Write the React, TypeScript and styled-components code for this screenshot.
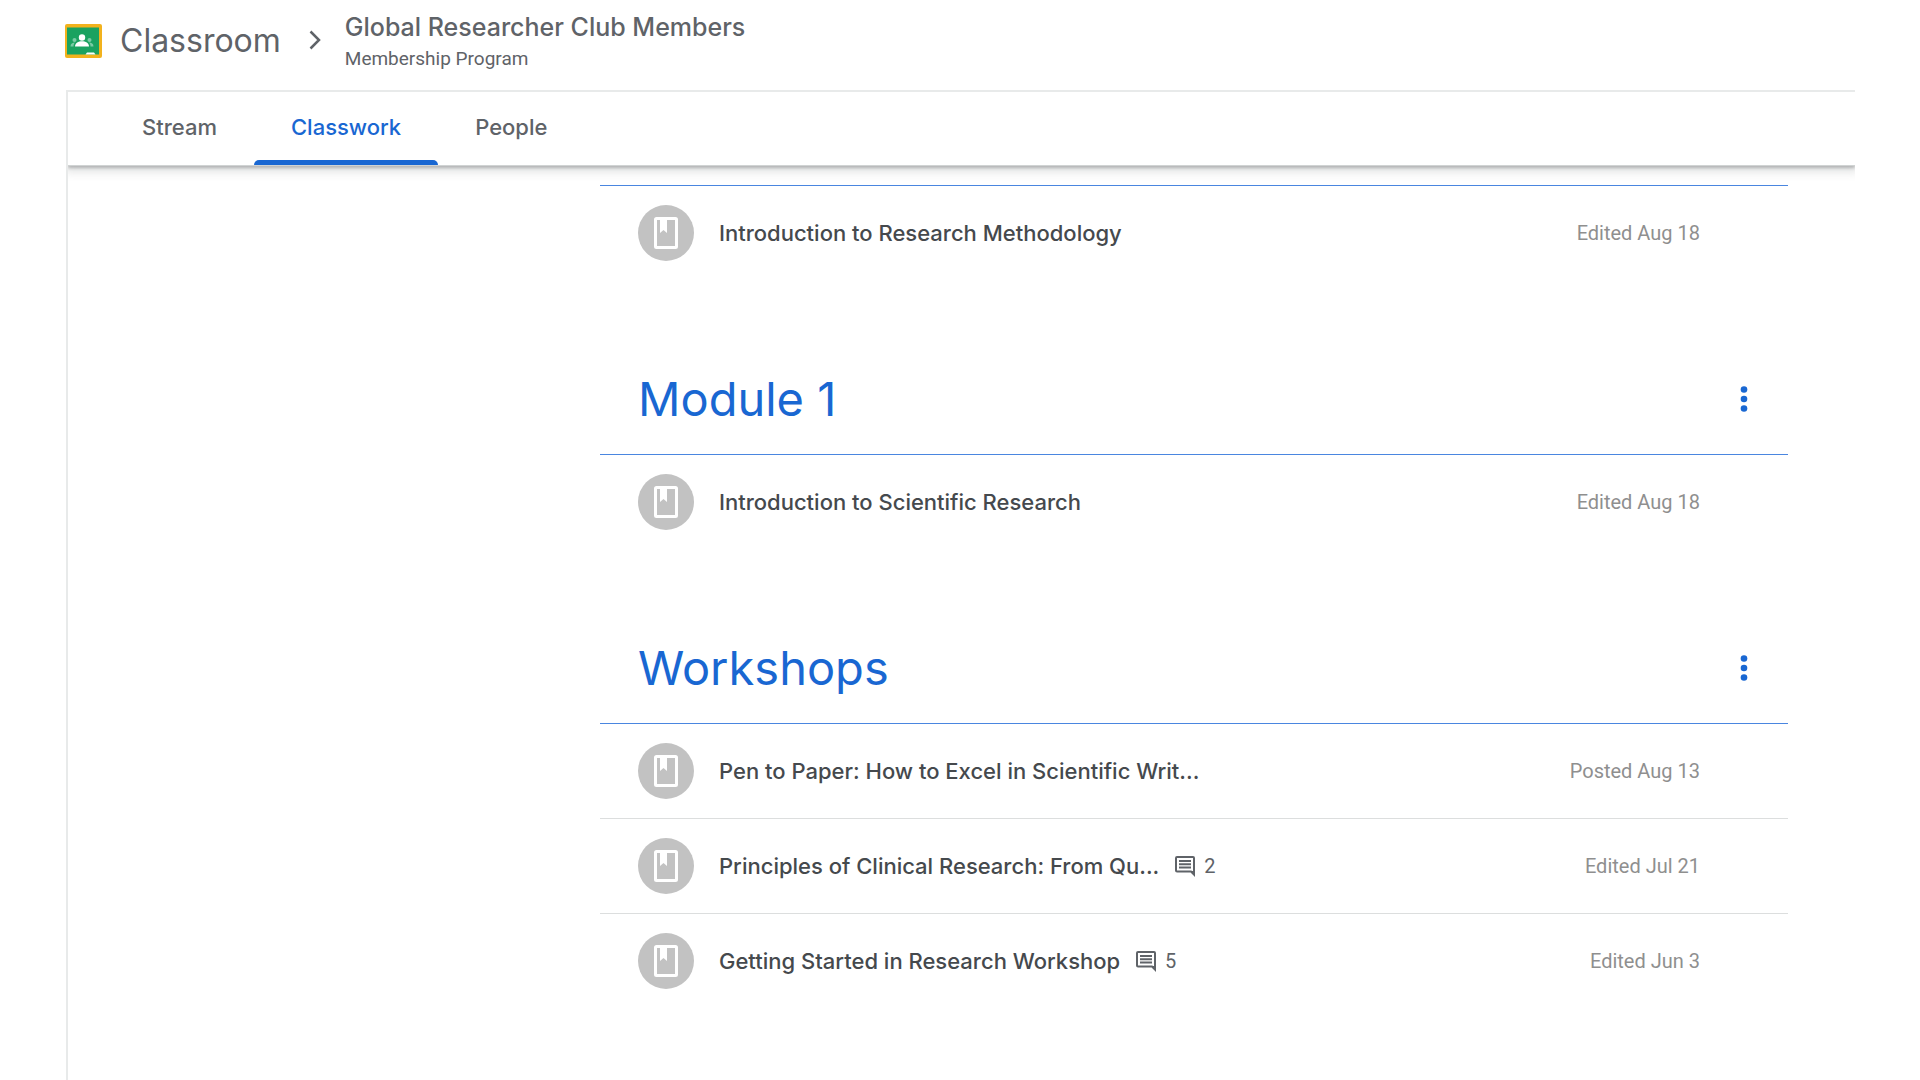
import React from "react";
import styled, { createGlobalStyle } from "styled-components";

const blue = "#1967d2";
const sans = `Inter, "Liberation Sans", sans-serif`;
const roboto = `Roboto, "Liberation Sans", sans-serif`;

const GlobalStyle = createGlobalStyle`
  *, *::before, *::after { box-sizing: border-box; }
  body { margin: 0; background: #fff; color: #45494d; font-family: ${sans}; }
  h1, h2, p, ul { margin: 0; padding: 0; }
  ul { list-style: none; }
  a { color: inherit; text-decoration: none; }
`;

const Page = styled.div`
  display: flex;
  flex-direction: column;
  min-height: 100vh;
  padding: 0 65px;
`;

const TopBar = styled.header`
  display: flex;
  align-items: center;
  height: 90px;
  color: #5f6368;
`;

const Brand = styled.a`
  display: flex;
  align-items: center;
  gap: 17px;
  padding-bottom: 8px;
  font-size: 32px;
  line-height: 40px;
`;

const Chevron = styled.svg`
  width: 12px;
  height: 20px;
  margin: 0 24px 10px 28px;
`;

const Course = styled.a`
  display: flex;
  flex-direction: column;
  padding-bottom: 7px;
`;

const CourseName = styled.span`
  font-size: 25px;
  font-weight: 500;
  line-height: 34px;
`;

const CourseSection = styled.span`
  font-family: ${roboto};
  font-size: 19px;
  line-height: 30px;
`;

const Panel = styled.div`
  display: flex;
  flex: 1;
  flex-direction: column;
  margin-left: 1px;
  border-top: 2px solid #e8eaea;
  border-left: 2px solid #e8eaea;
`;

const Tabs = styled.nav`
  display: flex;
  height: 74px;
  padding-left: 37px;
  border-bottom: 1px solid #d0d3d3;
  box-shadow: 0 2px 3px rgba(60, 64, 67, 0.3), 0 3px 9px 3px rgba(60, 64, 67, 0.15);
  clip-path: inset(0 0 -20px 0);
`;

const Tab = styled.a<{ $active?: boolean }>`
  display: flex;
  flex-direction: column;
  justify-content: space-between;
  padding: 21px 37px 0;
  color: ${(p) => (p.$active ? blue : "#5f6368")};
  font-size: 22px;
  font-weight: 500;
  line-height: 28px;

  &::after {
    content: "";
    height: 5px;
    margin: 0 -37px;
    border-radius: 5px 5px 0 0;
    background: ${(p) => (p.$active ? blue : "transparent")};
  }
`;

const Main = styled.main`
  width: calc(100% - 599px);
  margin: 0 67px 0 532px;
`;

const Topic = styled.section`
  padding-bottom: 79px;
`;

const TopicHeader = styled.div<{ $collapsed?: boolean }>`
  display: flex;
  align-items: center;
  justify-content: space-between;
  height: ${(p) => (p.$collapsed ? "20px" : "96px")};
  padding: 0 32px 15px 38px;
  border-bottom: 1px solid #4a86e0;
`;

const TopicName = styled.h2`
  color: ${blue};
  font-size: 47px;
  font-weight: 400;
  line-height: 60px;
`;

const MoreButton = styled.button`
  display: grid;
  place-items: center;
  width: 24px;
  height: 40px;
  padding: 0;
  border: 0;
  background: none;
  color: ${blue};
`;

const Row = styled.li`
  display: flex;
  align-items: center;
  height: 94px;
  padding: 0 88px 0 38px;

  & + & {
    height: 95px;
    border-top: 1px solid #dcdede;
  }
`;

const MaterialBadge = styled.span`
  display: grid;
  flex: none;
  place-items: center;
  width: 56px;
  height: 56px;
  margin-right: 25px;
  border-radius: 50%;
  background: #c2c2c2;
`;

const RowTitle = styled.a`
  font-size: 22px;
  font-weight: 500;
  line-height: 28px;
  white-space: nowrap;
`;

const Comments = styled.span`
  display: flex;
  align-items: center;
  gap: 8px;
  margin-left: 15px;
  color: #5f6368;
  font-family: ${roboto};
  font-size: 20px;
  line-height: 28px;
`;

const RowDate = styled.span`
  margin-left: auto;
  color: #8f8f8f;
  font-family: ${roboto};
  font-size: 20px;
  line-height: 28px;
  white-space: nowrap;
`;

const LogoIcon = () => (
  <svg width="38" height="34" viewBox="0 0 38 34" aria-hidden="true">
    <rect width="37" height="34" rx="2" fill="#f2b21d" />
    <rect x="2" y="3.500" width="32" height="27" fill="#1aa260" />
    <circle cx="17" cy="13.500" r="3.200" fill="#fff" />
    <path d="M10 22.500c0-3.600 3.500-5.300 7-5.300s7 1.700 7 5.300z" fill="#fff" />
    <circle cx="9.500" cy="16" r="2" fill="#7bcba5" />
    <circle cx="24.500" cy="16" r="2" fill="#7bcba5" />
    <path d="M5.500 22.500c0-3 2-4 4.500-4-1 1-1.500 2.300-1.500 4zM28.500 22.500c0-3-2-4-4.500-4 1 1 1.500 2.300 1.500 4z" fill="#7bcba5" />
    <path d="M20.500 30.500l1.500-2h7l1.500 2z" fill="#fff" />
  </svg>
);

const BookIcon = () => (
  <svg width="26" height="34" viewBox="0 0 26 34" aria-hidden="true">
    <path
      fill="#fff"
      fillRule="evenodd"
      d="M3.500 1h19A2.500 2.500 0 0 1 25 3.500v27a2.500 2.500 0 0 1-2.500 2.500h-19A2.500 2.500 0 0 1 1 30.500v-27A2.500 2.500 0 0 1 3.500 1zM4 4v26h18V4h-8v13l-3.500-3L7 17V4z"
    />
  </svg>
);

const MoreIcon = () => (
  <svg width="8" height="28" viewBox="0 0 8 28" fill="currentColor" aria-hidden="true">
    <circle cx="4" cy="4.500" r="3.300" />
    <circle cx="4" cy="14" r="3.300" />
    <circle cx="4" cy="23.500" r="3.300" />
  </svg>
);

const CommentIcon = () => (
  <svg width="22" height="22" viewBox="0 0 22 22" fill="none" stroke="currentColor" strokeWidth="2" aria-hidden="true">
    <path d="M20 19.500V3a1 1 0 0 0-1-1H3a1 1 0 0 0-1 1v12.500a1 1 0 0 0 1 1h14z" />
    <path d="M17 16l4 5v-5z" fill="currentColor" stroke="none" />
    <path d="M5 6h12M5 9.300h12M5 12.600h12" />
  </svg>
);

type Item = { title: string; date: string; comments?: number };

const topics: { name?: string; items: Item[] }[] = [
  { items: [{ title: "Introduction to Research Methodology", date: "Edited Aug 18" }] },
  { name: "Module 1", items: [{ title: "Introduction to Scientific Research", date: "Edited Aug 18" }] },
  {
    name: "Workshops",
    items: [
      { title: "Pen to Paper: How to Excel in Scientific Writ...", date: "Posted Aug 13" },
      { title: "Principles of Clinical Research: From Qu...", date: "Edited Jul 21", comments: 2 },
      { title: "Getting Started in Research Workshop", date: "Edited Jun 3", comments: 5 },
    ],
  },
];

export default function App() {
  return (
    <Page>
      <GlobalStyle />
      <TopBar>
        <Brand href="#home">
          <LogoIcon />
          Classroom
        </Brand>
        <Chevron viewBox="0 0 12 20" fill="none" stroke="currentColor" strokeWidth="2.500" aria-hidden="true">
          <path d="M1.500 1.500L10 10l-8.500 8.500" />
        </Chevron>
        <Course href="#course">
          <CourseName>Global Researcher Club Members</CourseName>
          <CourseSection>Membership Program</CourseSection>
        </Course>
      </TopBar>
      <Panel>
        <Tabs>
          <Tab href="#stream">Stream</Tab>
          <Tab href="#classwork" $active aria-current="page">
            Classwork
          </Tab>
          <Tab href="#people">People</Tab>
        </Tabs>
        <Main>
          {topics.map((topic, i) => (
            <Topic key={i}>
              <TopicHeader $collapsed={!topic.name}>
                {topic.name && <TopicName>{topic.name}</TopicName>}
                {topic.name && (
                  <MoreButton type="button" aria-label={`Options for ${topic.name}`}>
                    <MoreIcon />
                  </MoreButton>
                )}
              </TopicHeader>
              <ul>
                {topic.items.map((item) => (
                  <Row key={item.title}>
                    <MaterialBadge>
                      <BookIcon />
                    </MaterialBadge>
                    <RowTitle href="#material">{item.title}</RowTitle>
                    {item.comments && (
                      <Comments>
                        <CommentIcon />
                        {item.comments}
                      </Comments>
                    )}
                    <RowDate>{item.date}</RowDate>
                  </Row>
                ))}
              </ul>
            </Topic>
          ))}
        </Main>
      </Panel>
    </Page>
  );
}
